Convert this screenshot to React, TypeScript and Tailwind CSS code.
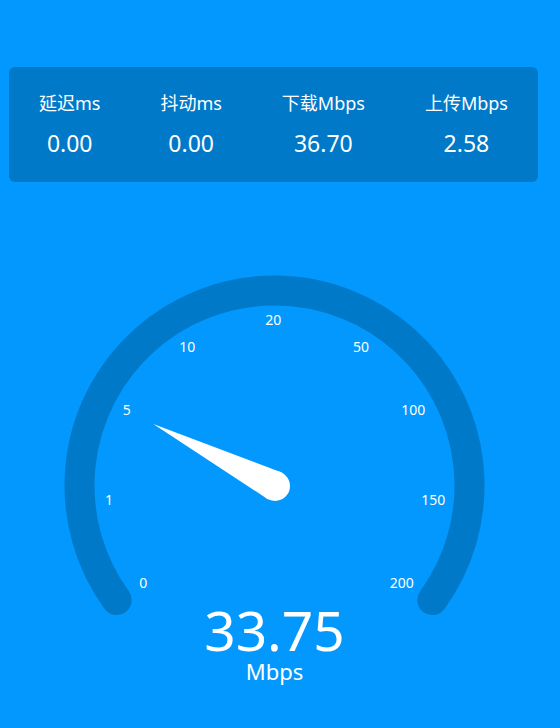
const stats = [
  { label: "延迟ms", value: "0.00" },
  { label: "抖动ms", value: "0.00" },
  { label: "下载Mbps", value: "36.70" },
  { label: "上传Mbps", value: "2.58" },
];

// tick labels, placed where they sit around the dial (svg coords)
const ticks = [
  { text: "0", x: 143.3, y: 322.7 },
  { text: "1", x: 109, y: 240 },
  { text: "5", x: 126.7, y: 150 },
  { text: "10", x: 187.3, y: 87.3 },
  { text: "20", x: 273.3, y: 60 },
  { text: "50", x: 361, y: 87.3 },
  { text: "100", x: 413.3, y: 150 },
  { text: "150", x: 433.3, y: 240 },
  { text: "200", x: 401.7, y: 322.7 },
];

function Gauge() {
  return (
    <svg width="560" height="340" viewBox="0 0 560 340" className="block overflow-visible">
      <path
        d="M 116.7 340.1 A 195 195 0 1 1 432.3 340.1"
        fill="none"
        stroke="#0079c8"
        strokeWidth="30"
        strokeLinecap="round"
      />
      {ticks.map((t) => (
        <text key={t.text} x={t.x} y={t.y + 5} textAnchor="middle" fontSize="14" fill="#ffffff">
          {t.text}
        </text>
      ))}
      <polygon points="153.3,164 281.8,212.6 268.2,239.4" fill="#ffffff" />
      <circle cx="275" cy="226" r="15" fill="#ffffff" />
    </svg>
  );
}

export default function App() {
  return (
    <div className="w-[560px] h-[728px] overflow-hidden bg-[#0398fe] text-white font-['Noto_Sans','Noto_Sans_CJK_SC',sans-serif]">
      <div className="pt-[67px] pl-[9px]">
        <div className="w-[529px] h-[115px] rounded-md bg-[#0079c8] flex justify-around items-start pt-[24px]">
          {stats.map((s) => (
            <div key={s.label} className="flex flex-col items-center">
              <span className="text-[18px] leading-[24px]">{s.label}</span>
              <span className="mt-[13px] text-[23px] leading-[30px]">{s.value}</span>
            </div>
          ))}
        </div>
      </div>

      <div className="mt-[78px]">
        <Gauge />
      </div>

      <div className="flex flex-col items-center w-[549px]">
        <span className="text-[55px] leading-[59px]">33.75</span>
        <span className="text-[22px] leading-[24px]">Mbps</span>
      </div>
    </div>
  );
}
